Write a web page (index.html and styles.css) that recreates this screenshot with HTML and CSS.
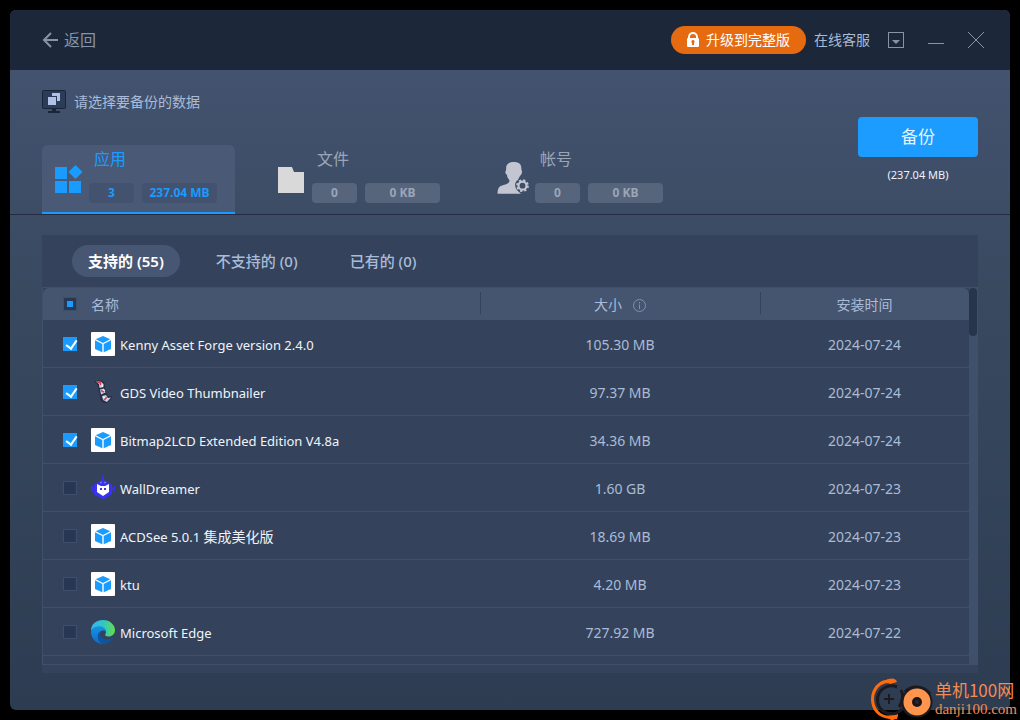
FILE: index.html
```html
<!DOCTYPE html>
<html lang="zh-CN">
<head>
<meta charset="utf-8">
<meta name="viewport" content="width=device-width, initial-scale=1">
<title>请选择要备份的数据</title>
<link rel="stylesheet" href="styles.css">
</head>
<body>
<svg class="defs" aria-hidden="true">
  <symbol id="box" viewBox="0 0 24 24">
    <rect width="24" height="24" rx="1" fill="#fff"/>
    <path d="M12 4l7.300 3.200L12 11 4.700 7.200z" fill="#1a9bff"/>
    <path d="M4 8.300l7.300 3.700v8.200L4 17z" fill="#1a9bff"/>
    <path d="M20 8.300L12.700 12v8.200L20 17z" fill="#1a9bff"/>
  </symbol>
</svg>
<div class="window">
  <header class="titlebar">
    <button class="back" type="button">
      <svg width="16" height="16" viewBox="0 0 16 16" fill="none" stroke="currentColor" stroke-width="2"><path d="M9 1L2 8l7 7M2 8h14"/></svg>
      <span>返回</span>
    </button>
    <div class="title-actions">
      <button class="upgrade" type="button">
        <svg width="14" height="16" viewBox="0 0 14 16"><path d="M3 7V5a4 4 0 0 1 8 0v2" fill="none" stroke="#fff" stroke-width="2"/><rect x="1" y="6" width="12" height="9" rx="1" fill="#fff"/><path d="M7 8a1.700 1.700 0 0 1 1 3v2H6v-2a1.700 1.700 0 0 1 1-3z" fill="#e66b10"/></svg>
        <span>升级到完整版</span>
      </button>
      <a class="support" href="#support">在线客服</a>
      <div class="window-controls">
        <button type="button" aria-label="菜单"><svg width="16" height="16" viewBox="0 0 16 16"><rect x=".5" y=".5" width="15" height="15" fill="none" stroke="currentColor"/><path d="M4 8h8l-4 4z" fill="currentColor"/></svg></button>
        <button type="button" aria-label="最小化"><svg width="16" height="16" viewBox="0 0 16 16"><path d="M0 11.500h16" stroke="currentColor"/></svg></button>
        <button type="button" aria-label="关闭"><svg width="16" height="16" viewBox="0 0 16 16"><path d="M0 0l16 16M16 0L0 16" stroke="currentColor"/></svg></button>
      </div>
    </div>
  </header>

  <section class="summary">
    <div class="summary-main">
      <h1 class="prompt">
        <svg width="24" height="24" viewBox="0 0 24 24"><rect x=".5" y=".5" width="23" height="18" rx="1" fill="#2b3b58" stroke="#192539"/><path d="M10 19h4v2h4v2H6v-2h4z" fill="#192539"/><path d="M10 3h8v8h-3V6h-5z" fill="#b0c2e8"/><rect x="6" y="7" width="8" height="8" fill="#b0c2e8"/></svg>
        <span>请选择要备份的数据</span>
      </h1>
      <nav class="tabs">
        <button class="tab active" type="button">
          <svg class="tab-icon" width="32" height="32" viewBox="0 0 32 32" fill="#1a9bff"><path d="M4 5h12v12H4zM4 19h12v12H4zM18 19h12v12H18zM24.500 3l7 7-7 7-7-7z"/></svg>
          <span class="tab-title">应用</span>
          <span class="pill count">3</span>
          <span class="pill size">237.04 MB</span>
        </button>
        <button class="tab" type="button">
          <svg class="tab-icon" width="32" height="32" viewBox="0 0 32 32"><path d="M4 5h14l2 5h10v21H4z" fill="#d9d9d9"/></svg>
          <span class="tab-title">文件</span>
          <span class="pill count">0</span>
          <span class="pill size">0 KB</span>
        </button>
        <button class="tab" type="button">
          <svg class="tab-icon" width="32" height="32" viewBox="0 0 32 32" fill="#c3c5d0"><path d="M16.500 0c6 0 8 2 8 8 1.500 3-.5 5-1.500 6-1 2-2 3-2 4-4 2-4 8 1 12l2 1.700H.5c0-6 2-7.700 6-8.700 4-1 6-2 6-4.500C12 17 10 16 10 13c-2-1-2-4-.8-5C8.500 3 11 0 16.500 0z"/><circle cx="25.500" cy="23.700" r="4" fill="none" stroke="#c3c5d0" stroke-width="2.200"/><circle cx="25.500" cy="23.700" r="5.500" fill="none" stroke="#c3c5d0" stroke-width="1.800" stroke-dasharray="2.200 2.120"/></svg>
          <span class="tab-title">帐号</span>
          <span class="pill count">0</span>
          <span class="pill size">0 KB</span>
        </button>
      </nav>
    </div>
    <div class="backup">
      <button class="backup-button" type="button">备份</button>
      <span class="backup-size">(237.04 MB)</span>
    </div>
  </section>

  <main class="content">
    <div class="panel">
      <nav class="filters">
        <button class="filter active" type="button">支持的 (55)</button>
        <button class="filter" type="button">不支持的 (0)</button>
        <button class="filter" type="button">已有的 (0)</button>
      </nav>
      <div class="list">
        <div class="list-view">
          <table class="apps">
            <colgroup><col class="col-name"><col class="col-size"><col class="col-date"></colgroup>
            <thead>
              <tr>
                <th><div class="name-cell"><input class="check partial" type="checkbox" aria-label="全选"><span>名称</span></div></th>
                <th><div class="size-head">大小 <svg width="13" height="13" viewBox="0 0 13 13" fill="none" stroke="#7e90b0"><circle cx="6.500" cy="6.500" r="6"/><path d="M6.500 3v1.500M6.500 5.500V10"/></svg></div></th>
                <th>安装时间</th>
              </tr>
            </thead>
            <tbody>
              <tr><td><label class="name-cell"><input class="check" type="checkbox" checked><svg class="app-icon"><use href="#box"/></svg><span>Kenny Asset Forge version 2.4.0</span></label></td><td>105.30 MB</td><td>2024-07-24</td></tr>
              <tr><td><label class="name-cell"><input class="check" type="checkbox" checked><svg class="app-icon" viewBox="0 0 24 24"><path d="M3 1.500l4-1 4 .2 2.500 2.300.5 6 2 5.500 1 2 4.500-.5-2 4-3.500 3-4-.5-3-3v-4L8 12 7 6 5.500 3z" fill="#2c2942"/><path d="M5 1.500l5 .3 2.500 2.200V7l-4 1L8 4zM9 9.500l4-1 1.500 4-4.500 2zM11 16l4-1 2 3 3-.5-4 4.500-4-2z" fill="#bcd3ea"/><path d="M6 2l3 .5 1 2.500M10 10.500l3 1.500M13 20l3-3" fill="none" stroke="#d2414d" stroke-width="1.700"/><path d="M11 4l.5 3M12 10l2 .5M12 17l2 1" stroke="#fff"/></svg><span>GDS Video Thumbnailer</span></label></td><td>97.37 MB</td><td>2024-07-24</td></tr>
              <tr><td><label class="name-cell"><input class="check" type="checkbox" checked><svg class="app-icon"><use href="#box"/></svg><span>Bitmap2LCD Extended Edition V4.8a</span></label></td><td>34.36 MB</td><td>2024-07-24</td></tr>
              <tr><td><label class="name-cell"><input class="check" type="checkbox"><svg class="app-icon" viewBox="0 0 24 24"><path d="M12 0v4M1 10v6M23 10v6M2 13h20" stroke="#3932dd" stroke-width="2"/><path d="M12 3.500l9 5v10l-9 5-9-5v-10z" fill="#3932ee"/><path d="M9 6.500h2m2 0h2" stroke="#756fff" stroke-width="1.500"/><path d="M6 8l4 2h4l4-2v8l-6 4-6-4z" fill="#fff"/><path d="M9 12h2v2H9zM13 12h2v2h-2z" fill="#3932ee"/></svg><span>WallDreamer</span></label></td><td>1.60 GB</td><td>2024-07-23</td></tr>
              <tr><td><label class="name-cell"><input class="check" type="checkbox"><svg class="app-icon"><use href="#box"/></svg><span>ACDSee 5.0.1 <span class="cjk">集成美化版</span></span></label></td><td>18.69 MB</td><td>2024-07-23</td></tr>
              <tr><td><label class="name-cell"><input class="check" type="checkbox"><svg class="app-icon"><use href="#box"/></svg><span>ktu</span></label></td><td>4.20 MB</td><td>2024-07-23</td></tr>
              <tr><td><label class="name-cell"><input class="check" type="checkbox"><svg class="app-icon" viewBox="0 0 24 24"><defs><linearGradient id="edge-top"><stop offset="0" stop-color="#35b4ee"/><stop offset=".5" stop-color="#2fc6c6"/><stop offset="1" stop-color="#65dc4c"/></linearGradient><linearGradient id="edge-side" x2="0" y2="1"><stop offset="0" stop-color="#1694e2"/><stop offset="1" stop-color="#0a6ccd"/></linearGradient></defs><path d="M0 11C0 4 5 0 12 0s12 5 12 10c0 4-3 6.500-6.500 6.500-3 0-4-1.300-3-2.500 2-4-2-7-6-7C4 7 1 9 0 11z" fill="url(#edge-top)"/><path d="M0 12c1-4 4.500-5.700 8.500-5.700 4 0 6.500 3 6 5.700-1-2-5-2-6 1-1.500 5 4 10.500 7 10.200C8 26 0 20 0 12z" fill="url(#edge-side)"/><path d="M8.500 11.500c-1 4 3 7.800 8 7.800 2.500 0 4-.8 5.700-1.700C19.500 22.500 16 24 12 24c-5-1-7-8-3.500-12.500z" fill="#10549c"/></svg><span>Microsoft Edge</span></label></td><td>727.92 MB</td><td>2024-07-22</td></tr>
            </tbody>
          </table>
        </div>
        <div class="scroll-track"><div class="scroll-thumb"></div></div>
      </div>
    </div>
  </main>
</div>
<div class="watermark">
  <svg width="64" height="42" viewBox="0 0 64 42" fill="none"><path d="M23 2C11-1 1 9 1 21c0 11 7 19 19 20h7l1-4c-2 1-3 2-5 1C11 39 4 31 4 21 4 11 12 4 20 5c1-1 2-1 3-3z" fill="#ff6a0a"/><path d="M14 3c7-4 12-3 13 1l-7 2zM16 38l12-2c0 4-3 6-7 6z" fill="#ff6a0a"/><path d="M27 9a14 14 0 1 0 5 22M31 12c3 5 2 12-2 17M35 14c6-7 18-7 25 2" stroke="#1c1a20" stroke-width="3"/><path d="M19 16v10M14 21h10" stroke="#1c1a20" stroke-width="2"/><path d="M33 18a15 15 0 0 0 8 19" stroke="#1c1a20" stroke-width="3"/><circle cx="47" cy="24" r="14.500" stroke="#1c1a20" stroke-width="2"/><circle cx="47" cy="24" r="13.500" fill="#ff944d"/><circle cx="47" cy="24" r="5" fill="#171619"/><circle cx="47" cy="24" r="2" fill="#332429"/></svg>
  <div class="watermark-text"><span class="watermark-name">单机100网</span><span class="watermark-url">danji100.com</span></div>
</div>
</body>
</html>
```
FILE: styles.css
```css
* { box-sizing: border-box; }

body {
  margin: 0;
  padding: 10px;
  min-height: 100vh;
  display: flex;
  background: #000;
  color: #a9bbd8;
  font: 14px/20px "Noto Sans", "Noto Sans CJK SC", sans-serif;
}

button {
  border: 0;
  padding: 0;
  background: none;
  color: inherit;
  font: inherit;
  cursor: pointer;
}

svg { display: block; flex: none; }
.defs { position: absolute; width: 0; height: 0; }

.window {
  flex: 1;
  min-width: 0;
  display: flex;
  flex-direction: column;
  border-radius: 6px;
  overflow: hidden;
  background: linear-gradient(#43536f, #43536f 60px, #394960 40%, #2d3c51);
}

.titlebar {
  display: flex;
  align-items: center;
  justify-content: space-between;
  height: 60px;
  padding: 0 26px 0 32px;
  background: #1c283a;
}

.back {
  display: flex;
  align-items: center;
  gap: 6px;
  color: #8594a8;
  font-size: 16px;
}

.title-actions { display: flex; align-items: center; }

.upgrade {
  display: flex;
  align-items: center;
  gap: 6px;
  height: 28px;
  padding: 0 16px 0 15px;
  border-radius: 14px;
  background: #e66b10;
  color: #fff;
}

.support {
  margin-left: 8px;
  color: #a9bbd3;
  text-decoration: none;
}

.window-controls {
  display: flex;
  gap: 24px;
  margin-left: 18px;
  color: #8794a8;
}

.summary {
  display: flex;
  justify-content: space-between;
  padding: 20px 32px 0;
  border-bottom: 1px solid #252b42;
}

.prompt {
  display: flex;
  align-items: center;
  gap: 8px;
  height: 24px;
  margin: 0 0 31px;
  font-size: 14px;
  font-weight: 400;
}

.tabs { display: flex; gap: 30px; }

.tab {
  display: grid;
  grid-template-columns: 30px 45px 75px;
  grid-template-rows: 28px 20px;
  column-gap: 8px;
  row-gap: 10px;
  align-items: center;
  width: 193px;
  height: 69px;
  padding: 0 0 11px 9px;
  border-bottom: 2px solid transparent;
  border-radius: 6px 6px 0 0;
  color: #9aa6b8;
  text-align: left;
}

.tab.active {
  border-bottom-color: #1a9bff;
  background: #4a5a76;
  color: #1a9bff;
}

.tab-icon {
  grid-row: 1 / 3;
  align-self: end;
  margin-bottom: 9px;
}

.tab-title {
  grid-column: 2 / 4;
  padding-left: 5px;
  font-size: 16px;
}

.pill {
  border-radius: 4px;
  background: #56657c;
  font-size: 12px;
  font-weight: 700;
  text-align: center;
}

.active .pill { background: #43526f; }

.backup {
  display: flex;
  flex-direction: column;
  align-items: center;
  gap: 8px;
  padding-top: 27px;
}

.backup-button {
  width: 120px;
  height: 40px;
  border-radius: 4px;
  background: #1c9cff;
  color: #e5f4ff;
  font-size: 17px;
}

.backup-size { color: #eef3fa; font-size: 11px; }

.content {
  flex: 1;
  display: flex;
  padding: 20px 32px 37px;
}

.panel {
  flex: 1;
  min-width: 0;
  display: flex;
  flex-direction: column;
  padding-bottom: 8px;
  background: #34435b;
}

.filters {
  display: flex;
  gap: 20px;
  padding: 10px 30px;
}

.filter {
  height: 32px;
  padding: 0 16px;
  border-radius: 16px;
  font-size: 15px;
  font-weight: 500;
}

.filter.active { background: #475773; color: #fff; font-weight: 600; }

.list {
  flex: 1;
  display: flex;
  border: 1px solid #40506a;
  border-right: 0;
}

.list-view { flex: 1; min-width: 0; }

.apps {
  width: 100%;
  table-layout: fixed;
  border-collapse: separate;
  border-spacing: 0;
}

.col-size { width: 280px; }
.col-date { width: 209px; }

.apps th {
  height: 32px;
  padding: 2px 0 0;
  background: linear-gradient(#34435b, #34435b) left 4px / 1px 22px no-repeat #45556f;
  font-weight: 400;
}

.apps th:first-child { border-radius: 6px 0 0; background: #45556f; }
.apps th:last-child { border-radius: 0 6px 0 0; }

.apps td {
  height: 48px;
  padding: 2px 0 0;
  border-bottom: 1px solid #40506a;
  text-align: center;
}

.name-cell {
  display: flex;
  align-items: center;
  gap: 5px;
  padding-left: 20px;
  color: #f0f4fa;
}

td .name-cell { font-size: 13px; }
th .name-cell { gap: 14px; color: inherit; }
.cjk { font-size: 14px; }

.size-head {
  display: flex;
  align-items: center;
  justify-content: center;
  gap: 11px;
}

.check {
  appearance: none;
  flex: none;
  width: 14px;
  height: 14px;
  margin: 0 9px 2px 0;
  border: 1px solid #3e4f6b;
  background: #263853;
}

.check:checked {
  border-color: #1a9bff;
  background: #1a9bff;
}

.check:checked::after {
  content: "";
  display: block;
  width: 5px;
  height: 9px;
  margin: 0 0 0 4px;
  border: solid #fff;
  border-width: 0 2px 2px 0;
  transform: rotate(35deg);
}

th .check { margin-right: 0; }
.check.partial { background: linear-gradient(#1a9bff, #1a9bff) center / 6px 6px no-repeat #263853; }

.app-icon { width: 24px; height: 24px; margin-bottom: 2px; }

.scroll-track { width: 9px; background: #41506a; }

.scroll-thumb {
  width: 8px;
  height: 48px;
  border-radius: 4px;
  background: #26354b;
}

/* Site mark laid over the window corner */
.watermark {
  position: absolute;
  right: 3px;
  bottom: 0;
  display: flex;
  align-items: center;
  gap: 1px;
  color: #f58b53;
}

.watermark-text { display: flex; flex-direction: column; }
.watermark-name { font: 17px/20px "Noto Sans CJK SC", sans-serif; }
.watermark-url { font: 15px/18px "Liberation Serif", serif; }
```
